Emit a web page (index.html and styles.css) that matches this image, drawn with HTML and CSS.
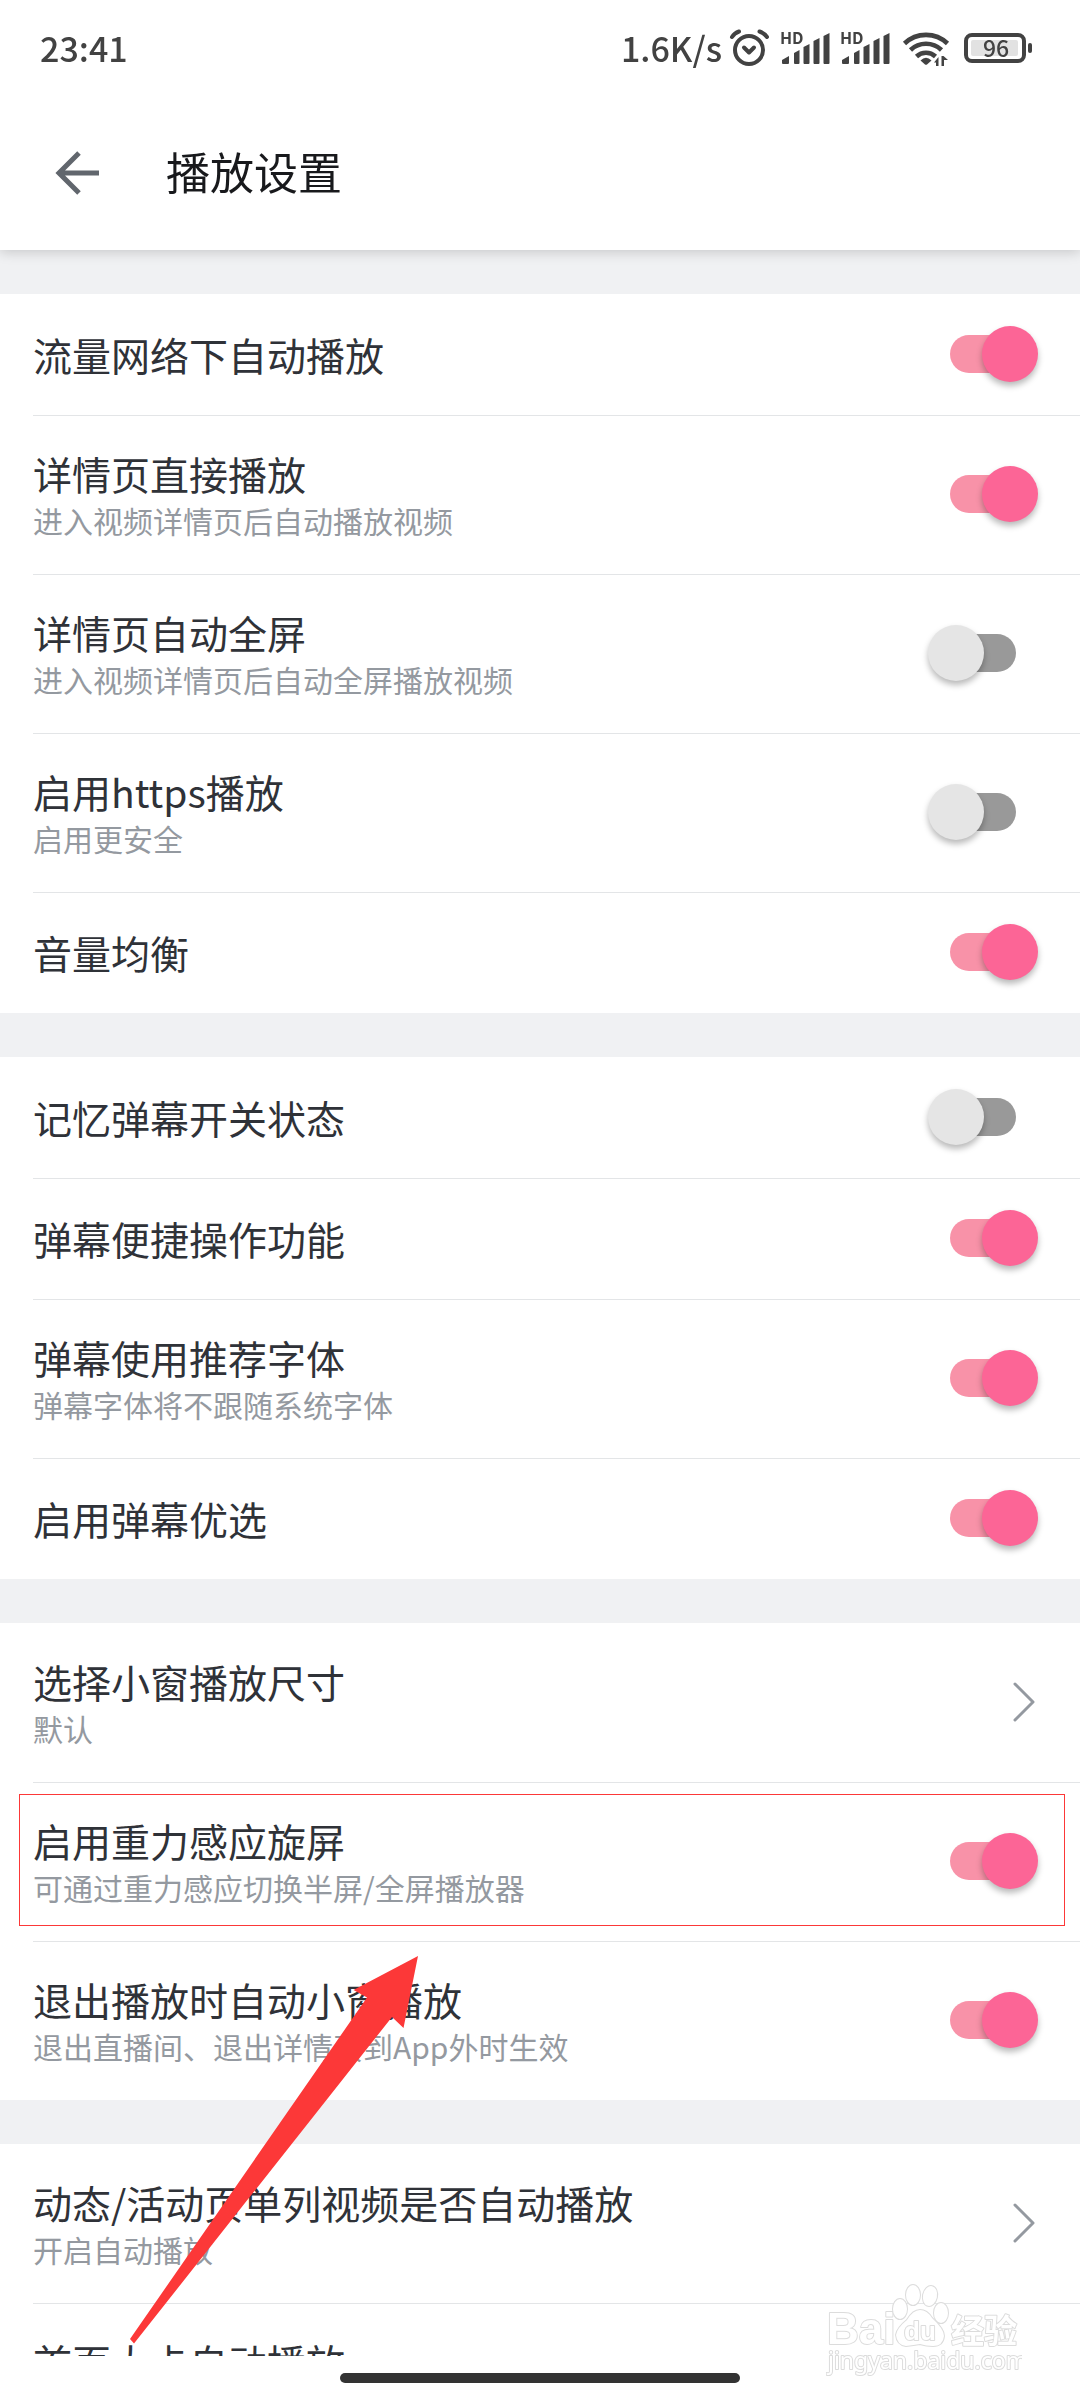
FILE: index.html
```html
<!DOCTYPE html>
<html lang="zh-CN">
<head>
<meta charset="utf-8">
<meta name="viewport" content="width=device-width, initial-scale=1">
<title>播放设置</title>
<link rel="stylesheet" href="styles.css">
</head>
<body class="screen">
  <header class="top">
    <div class="status">
      <time class="status-text">23:41</time>
      <div class="status-icons">
        <span class="status-text">1.6K/s</span>
        <svg class="icon" width="38" height="40" viewBox="2 0 38 40" aria-label="闹钟">
          <g fill="none" stroke="currentColor" stroke-linecap="round" stroke-linejoin="round">
            <circle cx="19" cy="22" r="14" stroke-width="4"/>
            <path d="M14 19.500l5 5 5-5" stroke-width="4"/>
            <path d="M2 9Q4.500 5 9 3.500M29.500 3.500Q34 5 37 9" stroke-width="4"/>
          </g>
        </svg>
        <svg class="icon" width="50" height="40" viewBox="0 0 50 40" aria-label="信号一">
          <text class="hd" x="0" y="16">HD</text>
          <path d="M2 32l7-4v7q0 1-1 1h-5q-1 0-1-1zM14 25l5.500-3v13q0 1-1 1h-3.500q-1 0-1-1zM23.500 19l6-3v19q0 1-1 1h-4q-1 0-1-1zM33.500 13l6-3v25q0 1-1 1h-4q-1 0-1-1zM43.500 8l6-3v30q0 1-1 1h-4q-1 0-1-1z" fill="currentColor"/>
        </svg>
        <svg class="icon" width="50" height="40" viewBox="0 0 50 40" aria-label="信号二">
          <text class="hd" x="0" y="16">HD</text>
          <path d="M2 32l7-4v7q0 1-1 1h-5q-1 0-1-1zM14 25l5.500-3v13q0 1-1 1h-3.500q-1 0-1-1zM23.500 19l6-3v19q0 1-1 1h-4q-1 0-1-1zM33.500 13l6-3v25q0 1-1 1h-4q-1 0-1-1zM43.500 8l6-3v30q0 1-1 1h-4q-1 0-1-1z" fill="currentColor"/>
        </svg>
        <svg class="icon" width="54" height="40" viewBox="0 0 54 40" aria-label="无线网络">
          <g fill="none" stroke="currentColor" stroke-width="4.600">
            <path d="M4.500 15.500A31 31 0 0 1 47.500 15.500"/>
            <path d="M10.500 22A22.500 22.500 0 0 1 41.500 22"/>
            <path d="M16.500 28.500A14 14 0 0 1 35.500 28.500"/>
          </g>
          <path d="M20.500 32.500Q26 27 31.500 32.500L27 36.500Q26 37.200 25 36.500z" fill="currentColor"/>
          <path d="M34 34.500l4.500-5.500v9h-2.500v-3.500zM48 32l-4.500-4h-2v10h2.500v-6z" fill="currentColor"/>
        </svg>
        <svg class="icon" width="68" height="40" viewBox="0 0 68 40" aria-label="电量">
          <rect x="2" y="7" width="58" height="26" rx="6" fill="none" stroke="currentColor" stroke-width="4"/>
          <rect x="7" y="12" width="47" height="16" rx="2" fill="#e2e2e2"/>
          <rect x="64" y="15" width="4" height="10" rx="2" fill="currentColor"/>
          <text class="charge" x="32" y="29" text-anchor="middle">96</text>
        </svg>
      </div>
    </div>
    <div class="toolbar">
      <button class="back" type="button" aria-label="返回">
        <svg class="icon" width="44" height="44" viewBox="0 0 44 44">
          <path d="M44 22H4M24 2L4 22l20 20" fill="none" stroke="currentColor" stroke-width="5"/>
        </svg>
      </button>
      <h1 class="heading">播放设置</h1>
    </div>
  </header>

  <main class="list">
    <section class="group">
      <label class="row"><span class="text"><span class="title">流量网络下自动播放</span></span><input class="switch" type="checkbox" role="switch" checked></label>
      <label class="row"><span class="text"><span class="title">详情页直接播放</span><span class="note">进入视频详情页后自动播放视频</span></span><input class="switch" type="checkbox" role="switch" checked></label>
      <label class="row"><span class="text"><span class="title">详情页自动全屏</span><span class="note">进入视频详情页后自动全屏播放视频</span></span><input class="switch" type="checkbox" role="switch"></label>
      <label class="row"><span class="text"><span class="title">启用https播放</span><span class="note">启用更安全</span></span><input class="switch" type="checkbox" role="switch"></label>
      <label class="row"><span class="text"><span class="title">音量均衡</span></span><input class="switch" type="checkbox" role="switch" checked></label>
    </section>

    <section class="group">
      <label class="row"><span class="text"><span class="title">记忆弹幕开关状态</span></span><input class="switch" type="checkbox" role="switch"></label>
      <label class="row"><span class="text"><span class="title">弹幕便捷操作功能</span></span><input class="switch" type="checkbox" role="switch" checked></label>
      <label class="row"><span class="text"><span class="title">弹幕使用推荐字体</span><span class="note">弹幕字体将不跟随系统字体</span></span><input class="switch" type="checkbox" role="switch" checked></label>
      <label class="row"><span class="text"><span class="title">启用弹幕优选</span></span><input class="switch" type="checkbox" role="switch" checked></label>
    </section>

    <section class="group">
      <a class="row" href="#size"><span class="text"><span class="title">选择小窗播放尺寸</span><span class="note">默认</span></span>
        <svg class="chevron" width="26" height="42" viewBox="0 0 26 42"><path d="M3 3l18 18L3 39" fill="none" stroke="currentColor" stroke-width="3" stroke-linecap="round" stroke-linejoin="round"/></svg></a>
      <div class="marked">
        <label class="row"><span class="text"><span class="title">启用重力感应旋屏</span><span class="note">可通过重力感应切换半屏/全屏播放器</span></span><input class="switch" type="checkbox" role="switch" checked></label>
        <svg class="pointer" width="290" height="390" viewBox="0 0 290 390" aria-hidden="true"><path d="M288 2L223.500 36 237 43.500 0 385l4 4.500L262 63l11.500 11z" fill="#fc3838"/></svg>
      </div>
      <label class="row"><span class="text"><span class="title">退出播放时自动小窗播放</span><span class="note">退出直播间、退出详情页到App外时生效</span></span><input class="switch" type="checkbox" role="switch" checked></label>
    </section>

    <section class="group">
      <a class="row" href="#feed"><span class="text"><span class="title">动态/活动页单列视频是否自动播放</span><span class="note">开启自动播放</span></span>
        <svg class="chevron" width="26" height="42" viewBox="0 0 26 42"><path d="M3 3l18 18L3 39" fill="none" stroke="currentColor" stroke-width="3" stroke-linecap="round" stroke-linejoin="round"/></svg></a>
      <a class="row row-top" href="#home"><span class="text"><span class="title">首页大卡自动播放</span></span></a>
    </section>
  </main>

  <footer class="gesture"><span class="pill"></span></footer>

  <svg class="watermark" width="196" height="100" viewBox="0 0 196 100" aria-label="Baidu 经验">
    <g fill="#fff" stroke="#dcdcdc" stroke-width="2" stroke-linejoin="round" paint-order="stroke">
      <text class="wm-brand" x="1" y="64">Bai</text>
      <text class="wm-cn" x="125" y="63">经验</text>
      <text class="wm-url" x="2" y="89">jingyan.baidu.com</text>
      <ellipse cx="74" cy="29" rx="7" ry="10"/>
      <ellipse cx="87" cy="15" rx="7" ry="10"/>
      <ellipse cx="104" cy="16" rx="7" ry="10" transform="rotate(12 104 16)"/>
      <ellipse cx="115" cy="33" rx="7" ry="10"/>
      <path d="M94 30Q101 30 106 38 118 49 118 56 117 66 107 66 100 66 94 64 88 65 80 66 71 65 70 55 71 48 81 40 87 30 94 30z"/>
      <text class="wm-du" x="78" y="60">du</text>
    </g>
  </svg>
</body>
</html>
```

FILE: styles.css
```css
* {
  box-sizing: border-box;
}

.screen {
  margin: 0;
  position: relative;
  display: flex;
  flex-direction: column;
  height: 100vh;
  overflow: hidden;
  background: #fff;
  color: #2f3238;
  font-family: "Noto Sans CJK SC", "Noto Sans", sans-serif;
}

.icon,
.chevron {
  display: block;
  flex: none;
  overflow: visible;
}

/* Header */

.top {
  position: relative;
  z-index: 1;
  background: #fff;
  box-shadow: 0 2px 12px rgba(0, 0, 0, 0.18);
}

.status {
  display: flex;
  justify-content: space-between;
  align-items: center;
  height: 96px;
  padding: 0 48px 0 40px;
  color: #424242;
}

.status-text {
  font-size: 34px;
  line-height: 40px;
  font-weight: 500;
}

.status-icons {
  display: flex;
  align-items: center;
  gap: 10px;
}

.hd {
  font: 700 16px "Noto Sans CJK SC", sans-serif;
  fill: currentColor;
}

.charge {
  font: 500 23px "Noto Sans CJK SC", sans-serif;
  fill: currentColor;
}

.toolbar {
  display: flex;
  align-items: center;
  gap: 67px;
  height: 154px;
  padding: 0 55px;
}

.back {
  padding: 0;
  border: 0;
  background: none;
  color: #61666d;
}

.heading {
  margin: 0;
  padding-bottom: 4px;
  color: #18191c;
  font-size: 44px;
  line-height: 52px;
  font-weight: 400;
}

/* Settings list */

.list {
  flex: 1;
  min-height: 0;
  overflow-y: auto;
  scrollbar-width: none;
  background: #f0f1f3;
}

.group {
  margin-top: 44px;
  padding-left: 33px;
  background: #fff;
}

.row {
  display: flex;
  align-items: center;
  justify-content: space-between;
  gap: 24px;
  min-height: 121px;
  padding: 31px 42px 33px 0;
  border-top: 1px solid #e3e5e7;
  color: inherit;
  text-decoration: none;
}

.group > .row:first-child {
  border-top-color: transparent;
}

.row-top {
  align-items: flex-start;
  min-height: 159px;
}

.text {
  display: flex;
  flex-direction: column;
}

.title {
  font-size: 39px;
  line-height: 52px;
}

.note {
  color: #9499a0;
  font-size: 30px;
  line-height: 42px;
}

.chevron {
  color: #9499a0;
}

.switch {
  appearance: none;
  flex: none;
  display: grid;
  align-items: center;
  width: 110px;
  height: 56px;
  margin: 0;
}

.switch::before,
.switch::after {
  content: "";
  grid-area: 1 / 1;
}

.switch::before {
  justify-self: center;
  width: 66px;
  height: 38px;
  border-radius: 19px;
  background: #999;
}

.switch::after {
  justify-self: start;
  width: 56px;
  height: 56px;
  border-radius: 50%;
  background: #e5e5e5;
  box-shadow: 0 4px 6px rgba(0, 0, 0, 0.28);
}

.switch:checked::before {
  background: #f892a8;
}

.switch:checked::after {
  justify-self: end;
  background: #fc6596;
}

/* Callout around one setting, with an arrow pointing at it */

.marked {
  position: relative;
}

.marked::after {
  content: "";
  position: absolute;
  inset: 12px 15px 15px -14px;
  border: 1px solid #fc3838;
  pointer-events: none;
}

.pointer {
  position: absolute;
  z-index: 1;
  left: 97px;
  top: 172px;
  pointer-events: none;
}

/* Gesture bar */

.gesture {
  display: flex;
  justify-content: center;
  align-items: center;
  height: 44px;
  background: #fff;
}

.pill {
  width: 37%;
  height: 10px;
  border-radius: 5px;
  background: #333;
}

/* Watermark */

.watermark {
  position: absolute;
  right: 58px;
  bottom: 20px;
  pointer-events: none;
}

.wm-brand {
  font: 700 44px "Liberation Sans", sans-serif;
}

.wm-cn {
  font: 700 33px "Noto Sans CJK SC", sans-serif;
}

.wm-du {
  font: 700 26px "Liberation Sans", sans-serif;
}

.wm-url {
  font: 400 23px "Noto Sans", sans-serif;
}
```
